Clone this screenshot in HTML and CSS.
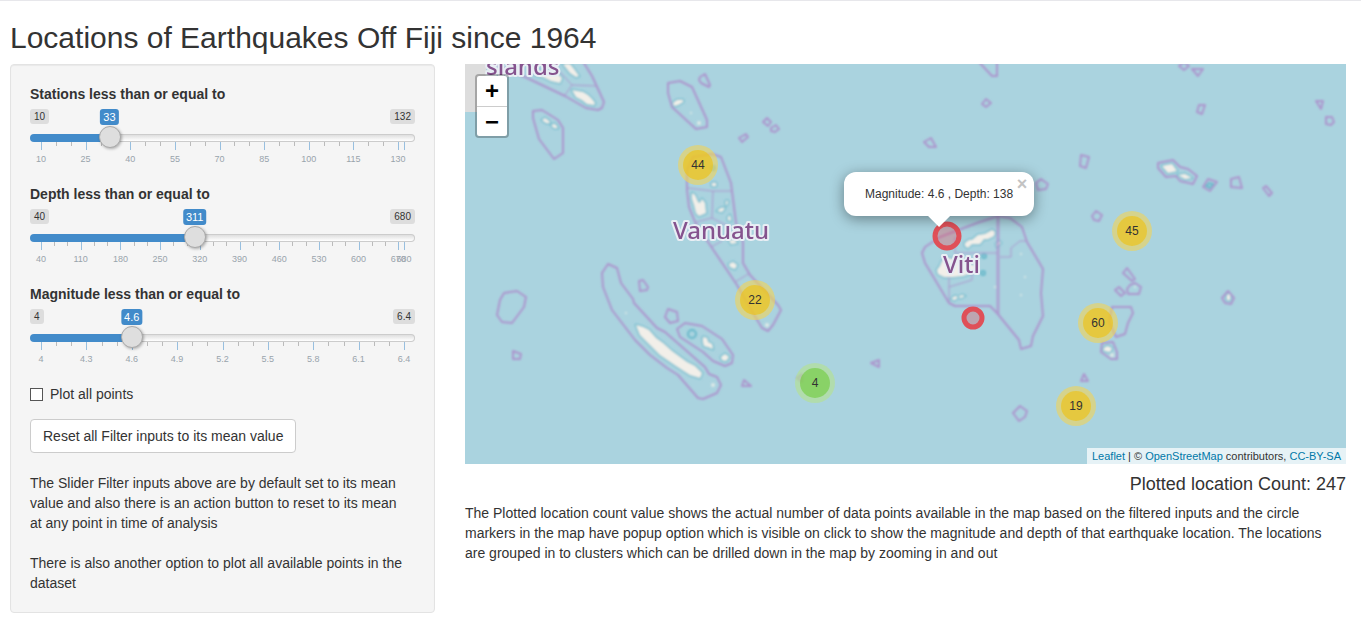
FILE: index.html
```html
<!DOCTYPE html>
<html lang="en">
<head>
<meta charset="utf-8">
<meta name="viewport" content="width=device-width, initial-scale=1">
<title>Locations of Earthquakes Off Fiji since 1964</title>
<link rel="stylesheet" href="styles.css">
</head>
<body>
<div class="page">
  <h1 class="title">Locations of Earthquakes Off Fiji since 1964</h1>
  <div class="layout">
    <form class="well">
      <div class="field">
        <label class="field-label" for="stations">Stations less than or equal to</label>
        <div class="slider" data-major="15">
          <div class="limits"><span>10</span><span>132</span></div>
          <output class="bubble" for="stations">33</output>
          <input class="range" id="stations" type="range" min="10" max="132" step="1" value="33">
          <div class="scale"></div>
        </div>
      </div>
      <div class="field">
        <label class="field-label" for="depth">Depth less than or equal to</label>
        <div class="slider" data-major="70" data-label-max>
          <div class="limits"><span>40</span><span>680</span></div>
          <output class="bubble" for="depth">311</output>
          <input class="range" id="depth" type="range" min="40" max="680" step="1" value="311">
          <div class="scale"></div>
        </div>
      </div>
      <div class="field">
        <label class="field-label" for="magnitude">Magnitude less than or equal to</label>
        <div class="slider" data-major="0.3">
          <div class="limits"><span>4</span><span>6.4</span></div>
          <output class="bubble" for="magnitude">4.6</output>
          <input class="range" id="magnitude" type="range" min="4" max="6.4" step="0.1" value="4.6">
          <div class="scale"></div>
        </div>
      </div>
      <label class="check"><input class="check-box" type="checkbox"><span>Plot all points</span></label>
      <button class="btn" type="button">Reset all Filter inputs to its mean value</button>
      <p class="note">The Slider Filter inputs above are by default set to its mean value and also there is an action button to reset to its mean at any point in time of analysis</p>
      <p class="note">There is also another option to plot all available points in the dataset</p>
    </form>

    <main class="content">
      <div class="map">
        <svg class="tiles" viewBox="465 64 881 400" width="881" height="400" role="img" aria-label="Map of the South Pacific around Fiji">
          <defs>
            <filter id="soft" x="-5%" y="-5%" width="110%" height="110%"><feGaussianBlur stdDeviation="0.8"/></filter>
            <filter id="soft-text" x="-5%" y="-5%" width="110%" height="110%"><feGaussianBlur stdDeviation="0.5"/></filter>
          </defs>
          <rect x="465" y="64" width="21" height="48" fill="#ddd"/>
          <g filter="url(#soft)">
            <g class="land">
              <path d="M530 70l8 0 10 4 8-2 6 6-2 5-9-2-8-4-8-2zM563 64h7l4 5 5 7-3 1-6-4z"/>
              <path d="M572 90l5 1 6 1 5 3 4 4 3 4-1 2-7-1-5-4-6-3z"/>
              <path d="M542 120l3-2 4 3 1 2-4 0zM551 125l4-1 3 4-4 0z"/>
              <path d="M636 325l7 2 6 3 7 8 7 5 9 8 15 11 8 4 7 7-2 5-10-3-14-9-16-11-10-10-10-10z"/>
              <path d="M703 337l4 1 1 4 4 2 1 5-5-2-4-1-1-4zM721 357l4-3 4 3-3 4-4-1z"/>
              <path d="M673 103l4-3 6 0 0 2-5 3-4 1z"/>
              <path d="M692 193l3 2 3 7 2 1 2-4 3 4 1 10-7 3-3-3-2-8-2-6z"/>
              <path d="M717 211l4-3 4 0-3 4zM726 201l2 0-1 4-1 0zM728 217l2-2 1 6-3-1zM712 183h4v3h-4z"/>
              <path d="M729 264l4-2 4 3-2 4-5-2z"/>
              <path d="M729 240l6 0 2 3-6 1z"/>
              <path d="M965 243l4-3 3 0 6-5 7-1 7-4 3 2-1 4-6 3-4 0-4 5-8 0-4 4-3-2z"/>
              <path d="M996 244l3-3 2 2-4 4z"/>
              <path d="M937 270l3-4 2-5 6-3 8 2 8 2 12 4 1 5-6 2-8 3-10 1-9 0-6-3z"/>
              <path d="M951 299l4-3 3 1-3 3zM958 297l4-2 3 1-4 2z"/>
              <path d="M1162 166l10-2 5 7-9 2zM1178 175l7-1 7 4-7 1z"/>
              <path d="M1103 349l4-3 5 2-2 4-5-1zM1227 295l3-1 0 6-3 0z"/>
            </g>
            <g class="reef">
              <circle cx="692" cy="334" r="4"/><circle cx="713" cy="168" r="2"/>
              <circle cx="983" cy="273" r="2"/><circle cx="984" cy="256" r="2"/>
              <path d="M1206 186l3-3 4 1-3 4z"/>
            </g>
            <g class="specks">
              <circle cx="767" cy="325" r="2"/><circle cx="713" cy="385" r="2"/>
              <circle cx="699" cy="123" r="2"/><circle cx="691" cy="113" r="1"/>
              <circle cx="1021" cy="254" r="1"/><circle cx="1025" cy="277" r="1"/>
              <circle cx="995" cy="287" r="1"/><circle cx="1021" cy="295" r="1"/><circle cx="1112" cy="355" r="2"/>
              <circle cx="626" cy="313" r="1"/><circle cx="1135" cy="287" r="1"/>
            </g>
            <g class="borders">
              <path d="M582 60L592 76 604 102 602 108 598 110 586 108 565 96 525 77 494 64"/>
              <path d="M533 111L542 110 558 120 563 128 563 153 554 159 539 139 533 118z"/>
              <path d="M608 264L617 268 621 283 633 299 634 303 657 328 665 332 705 367 709 374 717 377 721 385 717 393 703 399 698 398 678 375 667 368 650 355 635 340 612 310 603 287 602 273z"/>
              <path d="M639 281L643 280 648 287 647 290 640 291zM668 309L677 312 678 321 670 323 665 317z"/>
              <path d="M685 323L702 326 722 339 733 355 732 363 725 366 713 361 703 352 680 337 677 329z"/>
              <path d="M687 190L687 170 693 157 712 154 721 157 731 183 736 223 743 242 743 263 750 275 778 305 781 310 773 325 768 331 762 328 753 313 737 285 708 242 695 222 689 207z"/>
              <path d="M742 386L744 380 751 386zM797 378L802 374 802 382zM871 363L879 360 879 367z"/>
              <path d="M668 83L680 81 692 87 707 120 707 127 696 129 672 107 668 93z"/>
              <path d="M700 77L705 74 710 85 709 87 701 83 699 80z"/>
              <path d="M763 122L767 118 771 122 768 126zM771 128L776 125 779 129 775 132 771 131zM739 138L746 134 748 137 742 142z"/>
              <path d="M979 62L992 76 997 76V62M982 104L986 99 991 103 986 107zM924 142L931 138 936 147 929 147z"/>
              <path d="M1036 183L1041 179 1048 184 1046 189 1038 190z"/>
              <path d="M998 216L1010 218 1022 227 1027 242 1043 269 1041 293 1043 316 1033 336 1031 346 1021 349 1019 340 997 313 990 306 955 306 949 303 925 263 922 253 925 247 940 237 977 223z"/>
              <path d="M1092 216L1096 211 1102 215 1099 221 1094 220z"/>
              <path d="M1127 268L1135 279 1132 281 1123 273zM1115 290L1119 287 1125 293 1121 296zM1130 285L1135 283 1141 287 1139 294 1128 294 1127 289z"/>
              <path d="M1112 307L1131 307 1133 313 1128 323 1125 334 1116 337 1109 322zM1102 343L1113 342 1117 352 1117 359 1111 359 1101 352z"/>
              <path d="M1084 374L1088 381 1081 381z"/>
              <path d="M1179 66L1184 62 1189 66 1184 70zM1192 69L1203 69 1198 76zM1199 105L1205 105 1202 114 1197 112z"/>
              <path d="M1316 101L1323 101 1321 109zM1326 117L1332 117 1334 122 1331 125 1326 124zM1081 155L1089 157 1086 168 1080 166z"/>
              <path d="M1158 163L1173 160 1180 167 1188 169 1197 176 1193 184 1180 181 1176 176 1166 177 1158 168z"/>
              <path d="M1203 187L1208 179 1217 182 1210 191zM1231 179L1239 177 1242 188 1231 187zM1263 188L1266 186 1272 193 1269 196z"/>
              <path d="M1222 298L1228 291 1234 298 1231 304 1225 303zM1013 413L1020 406 1027 411 1025 417 1019 421z"/>
              <path d="M504 293L517 291 526 297 524 307 512 323 502 322 497 315 500 300z"/>
              <path d="M513 351L521 354 520 359 513 359z"/>
              <path class="strong" d="M998 216V314"/>
              <path class="inner" d="M560 72L572 85 597 86M572 85L565 95M688 188L712 191 731 191M713 191L712 218 696 222M712 218L732 228M735 282L750 273M711 247L722 241M955 237V253H997M1000 257H1011V248L1020 241H1027M949 277V302M949 287L972 280V272"/>
            </g>
          </g>
          <g class="places" filter="url(#soft-text)">
            <text x="486" y="75">slands</text>
            <text x="673" y="239">Vanuatu</text>
            <text x="943" y="273">Viti</text>
          </g>
          <g class="quakes">
            <circle cx="947" cy="236" r="12"/>
            <circle cx="973" cy="318" r="9"/>
          </g>
        </svg>
        <button class="cluster" type="button" style="left:233px;top:101px"><span>44</span></button>
        <button class="cluster" type="button" style="left:290px;top:236px"><span>22</span></button>
        <button class="cluster cluster-small" type="button" style="left:350px;top:319px"><span>4</span></button>
        <button class="cluster" type="button" style="left:667px;top:167px"><span>45</span></button>
        <button class="cluster" type="button" style="left:633px;top:259px"><span>60</span></button>
        <button class="cluster" type="button" style="left:611px;top:342px"><span>19</span></button>
        <div class="popup">
          <div class="popup-text">Magnitude: 4.6 , Depth: 138</div>
          <button class="popup-close" type="button" aria-label="Close popup">×</button>
        </div>
        <div class="zoom">
          <button class="zoom-btn" type="button" aria-label="Zoom in">+</button>
          <button class="zoom-btn" type="button" aria-label="Zoom out">−</button>
        </div>
        <div class="credit"><a href="#leaflet">Leaflet</a> | © <a href="#osm">OpenStreetMap</a> contributors, <a href="#license">CC-BY-SA</a></div>
      </div>
      <h2 class="count">Plotted location Count: 247</h2>
      <p class="about">The Plotted location count value shows the actual number of data points available in the map based on the filtered inputs and the circle markers in the map have popup option which is visible on click to show the magnitude and depth of that earthquake location. The locations are grouped in to clusters which can be drilled down in the map by zooming in and out</p>
    </main>
  </div>
</div>
<script src="sliders.js"></script>
</body>
</html>
```

FILE: styles.css
```css
* { box-sizing: border-box; }

body {
  margin: 0;
  border-top: 1px solid #e7e7eb;
  background: #fff;
  color: #333;
  font: 14px/20px "Liberation Sans", Arial, sans-serif;
}

button, input { font-family: inherit; color: inherit; }
a { color: #0078a8; text-decoration: none; }

.page { padding: 20px 15px 20px 10px; }

.title {
  margin: 0 0 10px;
  font-size: 30px;
  line-height: 33px;
  font-weight: 400;
}

.layout {
  display: grid;
  grid-template-columns: 425fr 881fr;
  gap: 30px;
  align-items: start;
}

.well {
  padding: 19px;
  border: 1px solid #e3e3e3;
  border-radius: 4px;
  background: #f5f5f5;
  box-shadow: inset 0 1px 1px rgba(0, 0, 0, .05);
}

/* Sliders */
.field { margin-bottom: 15px; }
.field-label { display: block; margin-bottom: 5px; font-weight: 700; }

.slider { position: relative; height: 60px; }

.limits {
  display: flex;
  justify-content: space-between;
  font-size: 10px;
  line-height: 15px;
}
.limits span { padding: 0 4px; border-radius: 3px; background: #ddd; }

.bubble {
  position: absolute;
  top: 0;
  left: calc(11px + (100% - 22px) * var(--at, 0));
  padding: 0 3px;
  border-radius: 3px;
  background: #428bca;
  color: #fff;
  font-size: 11px;
  line-height: 16px;
  transform: translateX(-50%);
}

.range {
  appearance: none;
  position: relative;
  z-index: 1;
  display: block;
  width: 100%;
  height: 22px;
  margin: 3px 0 0;
  background: none;
}
.range::-webkit-slider-runnable-track {
  height: 8px;
  border: 1px solid transparent;
  border-radius: 8px;
  background:
    linear-gradient(#428bca, #428bca) 0 0 / calc(11px + (100% - 22px) * var(--at, 0)) 100% no-repeat border-box,
    linear-gradient(#dedede, #fff) padding-box,
    linear-gradient(#ccc, #ccc) border-box;
}
.range::-webkit-slider-thumb {
  appearance: none;
  width: 22px;
  height: 22px;
  margin-top: -9px;
  border: 1px solid #aaa;
  border-radius: 50%;
  background: #dedede;
  box-shadow: 1px 1px 3px rgba(0, 0, 0, .3);
}

.scale { position: relative; height: 27px; margin: -7px 11px 0; }
.tick { position: absolute; top: 0; width: 1px; height: 8px; background: #98bfdf; }
.tick-minor { height: 4px; background: #bbb; }
.tick-label {
  position: absolute;
  top: 12px;
  color: #99a4ac;
  font-size: 9px;
  line-height: 10px;
  transform: translateX(-50%);
}

/* Form controls */
.check { display: flex; align-items: center; gap: 7px; margin-bottom: 15px; }
.check-box {
  appearance: none;
  width: 13px;
  height: 13px;
  margin: 0;
  border: 1px solid #555;
  background: #fff;
}
.check-box:checked { background: #428bca; }

.btn {
  display: block;
  margin: 0 0 20px;
  padding: 6px 12px;
  border: 1px solid #ccc;
  border-radius: 4px;
  background: #fff;
  font-size: 14px;
  line-height: 20px;
}

.note { margin: 0; padding-right: 8px; }
.note + .note { margin-top: 20px; }

/* Map */
.content { min-width: 0; }
.map { position: relative; height: 400px; overflow: hidden; background: #aad3df; }
.tiles { display: block; }

.land { fill: #f2efe9; stroke: #7cc0d0; stroke-width: 3; stroke-linejoin: round; paint-order: stroke; }
.reef { fill: none; stroke: #68b8ca; stroke-width: 2; }
.specks { fill: #e0eae8; }
.borders { fill: none; stroke: #ac95cd; stroke-width: 2; stroke-linejoin: round; }
.borders .strong { stroke-width: 3; stroke-opacity: .8; }
.borders .inner { stroke-width: 1; }
.places {
  fill: #85528e;
  stroke: #e8eef4;
  stroke-width: 4;
  stroke-linejoin: round;
  paint-order: stroke;
  font-family: "Noto Sans", sans-serif;
  font-size: 24px;
  font-weight: 500;
}
.quakes { fill: rgba(225, 80, 90, .35); stroke: #df5058; stroke-width: 5; }

.cluster {
  position: absolute;
  width: 40px;
  height: 40px;
  margin: -20px 0 0 -20px;
  padding: 5px;
  border: 0;
  border-radius: 50%;
  background: rgba(241, 211, 87, .6);
  font-size: 12px;
  line-height: 30px;
}
.cluster span { display: block; border-radius: 50%; background: rgba(240, 194, 12, .6); }
.cluster-small { background: rgba(181, 226, 140, .6); }
.cluster-small span { background: rgba(110, 204, 57, .6); }

.popup {
  position: absolute;
  left: 379px;
  top: 108px;
  padding: 13px 21px;
  border-radius: 12px;
  background: #fff;
  box-shadow: 0 3px 14px rgba(0, 0, 0, .4);
  font-size: 12px;
  line-height: 18px;
  white-space: nowrap;
}
.popup::after {
  content: "";
  position: absolute;
  left: 50%;
  top: 100%;
  width: 22px;
  height: 11px;
  margin-left: -11px;
  background: #fff;
  clip-path: polygon(0 0, 100% 0, 50% 100%);
}
.popup-close {
  position: absolute;
  top: 4px;
  right: 4px;
  width: 16px;
  height: 16px;
  padding: 0;
  border: 0;
  background: none;
  color: #c3c3c3;
  font-size: 18px;
  font-weight: 700;
  line-height: 16px;
}

.zoom {
  position: absolute;
  top: 10px;
  left: 10px;
  border: 2px solid rgba(0, 0, 0, .25);
  border-radius: 4px;
  background: #fff;
  background-clip: padding-box;
}
.zoom-btn {
  display: block;
  width: 30px;
  height: 30px;
  padding: 0;
  border: 0;
  background: none;
  color: #000;
  font: 700 24px/28px "Liberation Sans", Arial, sans-serif;
}
.zoom-btn + .zoom-btn { border-top: 1px solid #ccc; }

.credit {
  position: absolute;
  right: 0;
  bottom: 0;
  padding: 0 5px;
  background: rgba(255, 255, 255, .7);
  font-size: 11px;
  line-height: 16px;
}

.count { margin: 10px 0 9px; font-size: 18px; line-height: 20px; font-weight: 400; text-align: right; }
.about { margin: 0; padding-right: 8px; }

@media (max-width: 767px) {
  .layout { grid-template-columns: 1fr; }
}
```

FILE: sliders.js
```js
// Draws the scale under each slider and keeps its value bubble in step.
document.querySelectorAll('.slider').forEach(function (slider) {
  var input = slider.querySelector('.range');
  var bubble = slider.querySelector('.bubble');
  var scale = slider.querySelector('.scale');
  var min = Number(input.min);
  var max = Number(input.max);
  var major = Number(slider.dataset.major);

  function add(value, className, text) {
    var el = document.createElement('span');
    el.className = className;
    el.style.left = (value - min) / (max - min) * 100 + '%';
    if (text !== undefined) el.textContent = text;
    scale.appendChild(el);
  }

  var count = Math.floor((max - min) / major + 0.001);
  for (var i = 0; i <= count; i++) {
    var value = min + i * major;
    add(value, 'tick');
    add(value, 'tick-label', String(Math.round(value * 10) / 10));
    if (i < count) {
      add(value + major / 3, 'tick tick-minor');
      add(value + major * 2 / 3, 'tick tick-minor');
    }
  }
  if (max - (min + count * major) > 0.001) {
    add(max, 'tick');
    if ('labelMax' in slider.dataset) add(max, 'tick-label', String(max));
  }

  function update() {
    slider.style.setProperty('--at', (input.value - min) / (max - min));
    bubble.textContent = input.value;
  }
  input.addEventListener('input', update);
  update();
});
```
